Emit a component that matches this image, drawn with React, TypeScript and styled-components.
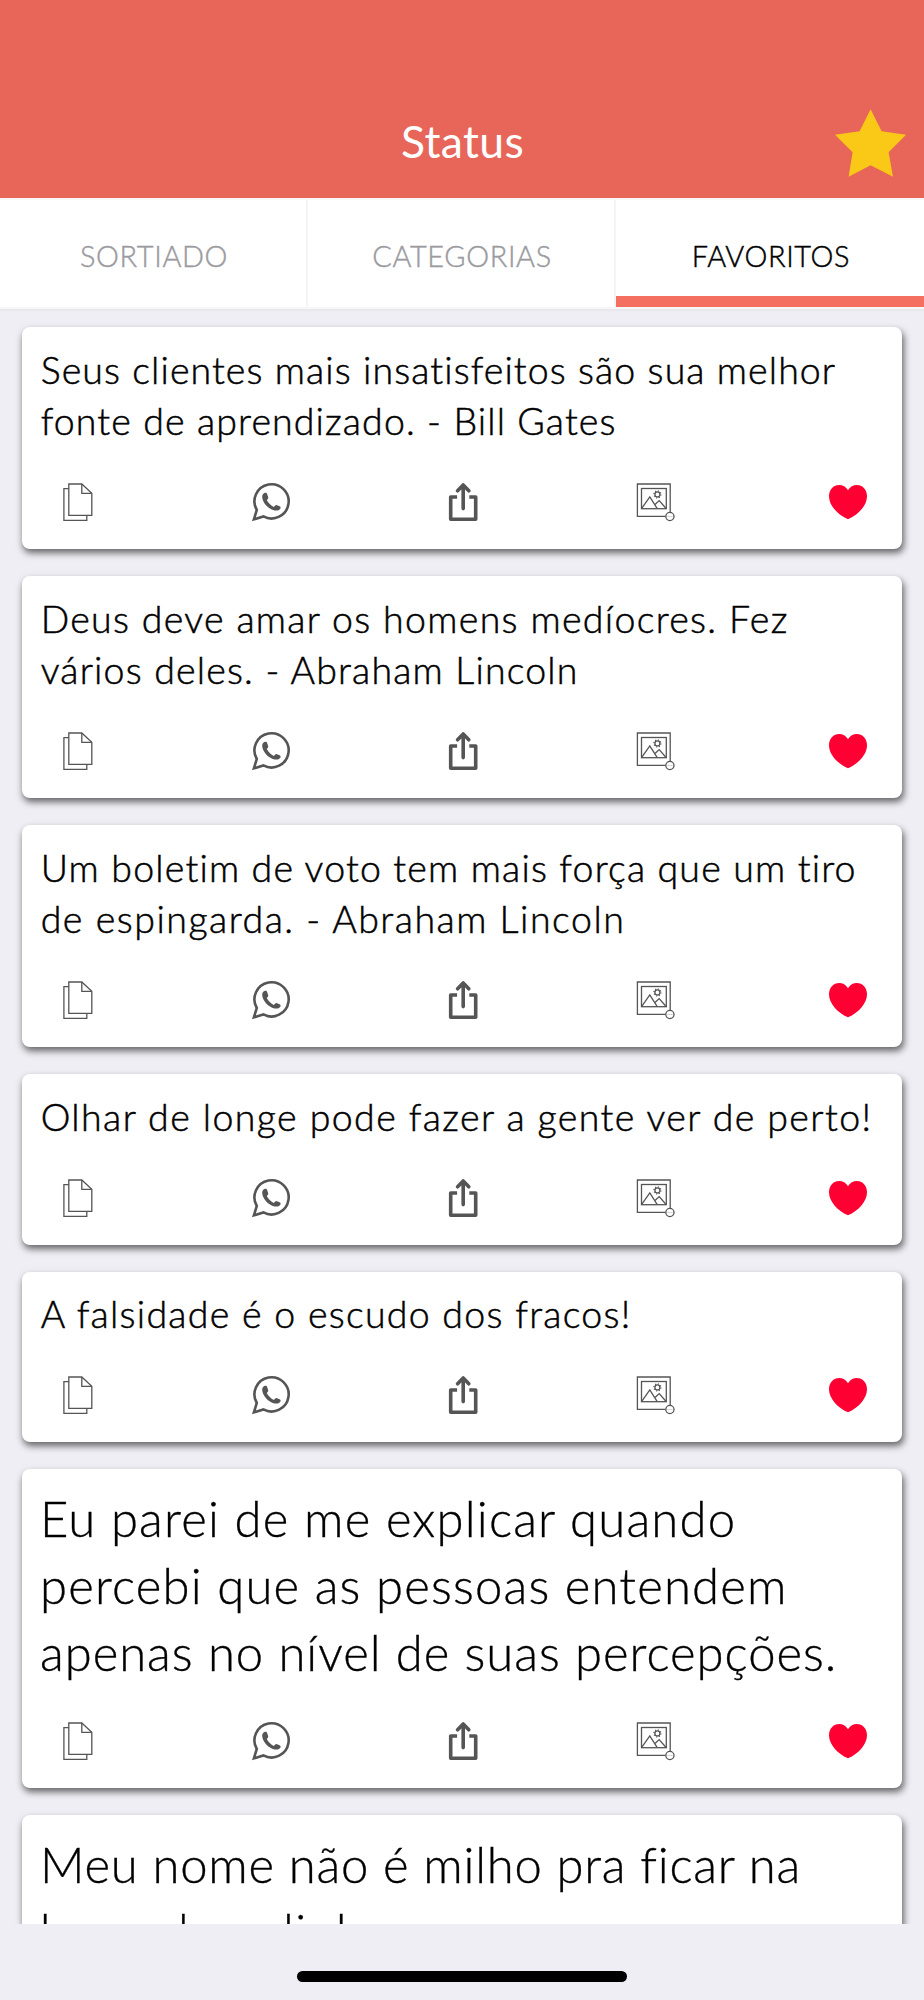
import React from 'react';
import styled, { createGlobalStyle } from 'styled-components';

const GlobalStyle = createGlobalStyle`
  * { box-sizing: border-box; }
  body { margin: 0; background: #efeef4; }
`;

const Screen = styled.div`
  display: flex;
  flex-direction: column;
  width: 924px;
  height: 2000px;
  overflow: hidden;
  background: #efeef4;
  font-family: Lato, "Open Sans", sans-serif;
`;

const Header = styled.header`
  display: grid;
  grid-template-columns: 1fr auto 1fr;
  flex: none;
  height: 198px;
  padding: 109px 18px 0 19px;
  background: #e86659;
`;

const Title = styled.h1`
  grid-column: 2;
  margin: 5px 0 0;
  font-size: 44.5px;
  font-weight: 400;
  line-height: 54px;
  letter-spacing: 0.35px;
  color: #fff;
`;

const StarIcon = styled.svg`
  grid-column: 3;
  justify-self: end;
  display: block;
  width: 71px;
  height: 68px;
  fill: #fac917;
`;

const Tabs = styled.nav`
  display: grid;
  grid-template-columns: 308px 308px 308px;
  flex: none;
  height: 111px;
  border-top: 2px solid #f8f8f9;
  border-bottom: 2px solid #f7f7f8;
  background: #fff;
`;

const Tab = styled.div<{ $active?: boolean }>`
  display: flex;
  justify-content: center;
  padding: 38px 0 0 2px;
  border-right: ${p => (p.$active ? 'none' : '2px solid #f5f5f6')};
  border-bottom: ${p => (p.$active ? '11px solid #f56f60' : 'none')};
  font-size: 28.9px;
  font-weight: 300;
  line-height: 36px;
  letter-spacing: 0.65px;
  color: ${p => (p.$active ? '#000' : '#9b9b9f')};
  -webkit-text-stroke: 0.45px currentColor;
`;

const List = styled.main`
  display: flex;
  flex-direction: column;
  flex: none;
  gap: 26.8px;
  height: 1615px;
  padding: 18px 22px 0;
  overflow: hidden;
  background: linear-gradient(#e4e4e9, #efeef4 3px);
`;

const Card = styled.article<{ $large?: boolean }>`
  flex: none;
  padding: ${p => (p.$large ? 15.6 : 16.5)}px 0 28px;
  border-radius: 8px;
  background: #fff;
  box-shadow: 1.5px 4px 7px rgba(0, 0, 0, 0.58);
`;

const Quote = styled.p<{ $large?: boolean }>`
  margin: 0;
  padding-left: ${p => (p.$large ? 18 : 18.7)}px;
  font-size: ${p => (p.$large ? 49 : 37.5)}px;
  line-height: ${p => (p.$large ? 67 : 51.6)}px;
  font-weight: 300;
  color: #000;
  white-space: nowrap;
  -webkit-text-stroke: ${p => (p.$large ? 0.35 : 0.5)}px #000;
`;

const Line = styled.span<{ $tracking: number }>`
  display: block;
  letter-spacing: ${p => p.$tracking}px;
`;

const Actions = styled.div`
  display: flex;
  justify-content: space-between;
  padding: 36.6px 35px 0 37px;
`;

const Icon = styled.svg`
  display: block;
  width: 38px;
  height: 38px;
  overflow: visible;
  fill: none;
  stroke: #555;
`;

const HomeArea = styled.footer`
  display: flex;
  justify-content: center;
  padding-top: 47px;
`;

const HomeBar = styled.div`
  width: 330px;
  height: 11px;
  border-radius: 6px;
  background: #000;
`;

const CopyIcon = () => (
  <Icon viewBox="0 0 38 38" strokeWidth="1.3">
    <path d="M9.8 1H22.8L32.8 10.3V32.3H9.8Z" />
    <path d="M22.8 1V10.3H32.8" />
    <path d="M9.8 5.6H4.9V37.4H27.8V32.3" />
  </Icon>
);

const WhatsAppIcon = () => (
  <Icon viewBox="0 0 38 38" strokeWidth="2.6">
    <path d="M1.9 36.3L4.8 27A17.1 17.1 0 1 1 11.4 33.4Z" />
    <path
      d="M12.4 10.1C13.8 9.6 14.8 9.9 15.2 11.2L16.2 14.3C16.5 15.3 15.6 16.1 14.8 17C16.4 20.1 18.8 22.6 21.9 23.9C22.8 23.2 23.3 21.9 24.4 22L27.6 23.2C28.7 23.6 28.9 24.6 28.3 25.7C27.2 27.5 24.8 27.8 22.5 27.4C16.3 26 10.8 20.2 10.2 14.3C10.1 12.6 10.6 10.9 12.4 10.1Z"
      fill="#555"
      stroke="none"
    />
  </Icon>
);

const ShareIcon = () => (
  <Icon viewBox="0 0 38 38" strokeWidth="3.6" strokeLinecap="round" strokeLinejoin="round">
    <path d="M11.3 14H6.7V36.2H31.7V14H27.1" strokeLinecap="square" />
    <path d="M19.2 25.6V2.8M13.6 7.8L19.2 2L24.8 7.8" />
  </Icon>
);

const ImageIcon = () => (
  <Icon viewBox="0 0 38 38" strokeWidth="1.3">
    <path d="M33.2 29V1H.4V33.4H28.5" />
    <rect x="4.5" y="5.5" width="24.8" height="20.2" />
    <path d="M4.9 25.2L12.8 14L20.1 25.4M17.7 21.8L22.2 17.6L28.9 25.2" />
    <circle cx="20.4" cy="11.4" r="2.5" />
    <circle cx="20.4" cy="11.4" r="3.5" strokeWidth="1.2" strokeDasharray="1.1 1.65" />
    <circle cx="32.9" cy="33.5" r="4.1" />
    <path d="M30.5 33.5H35.4" strokeWidth=".7" strokeDasharray="1 .9" strokeOpacity=".6" />
  </Icon>
);

const HeartIcon = () => (
  <Icon viewBox="0 0 38 38">
    <path
      d="M19 7.3C21 3.9 24.3 2.1 27.8 2.1C33.6 2.1 38 6.8 38 13.2C38 22.4 29.6 31.6 19 36.3C8.4 31.6 0 22.4 0 13.2C0 6.8 4.4 2.1 10.2 2.1C13.7 2.1 17 3.9 19 7.3Z"
      fill="#ff0033"
      stroke="none"
    />
  </Icon>
);

interface Status {
  large?: boolean;
  lines: [text: string, tracking: number][];
}

const statuses: Status[] = [
  { lines: [['Seus clientes mais insatisfeitos são sua melhor', 1.09], ['fonte de aprendizado. - Bill Gates', 1.12]] },
  { lines: [['Deus deve amar os homens medíocres. Fez', 1.32], ['vários deles. - Abraham Lincoln', 1.18]] },
  { lines: [['Um boletim de voto tem mais força que um tiro', 1.17], ['de espingarda. - Abraham Lincoln', 1.52]] },
  { lines: [['Olhar de longe pode fazer a gente ver de perto!', 1.41]] },
  { lines: [['A falsidade é o escudo dos fracos!', 1.27]] },
  {
    large: true,
    lines: [
      ['Eu parei de me explicar quando', 1.2],
      ['percebi que as pessoas entendem', 1.17],
      ['apenas no nível de suas percepções.', 0.97],
    ],
  },
  { large: true, lines: [['Meu nome não é milho pra ficar na', 0.74], ['boca de galinha.', 1.4]] },
];

export default function App() {
  return (
    <Screen>
      <GlobalStyle />
      <Header>
        <Title>Status</Title>
        <StarIcon viewBox="0 0 71 68">
          <path d="M35.6 .3L46.6 22.3L71 25.7L53.6 43.3L58 67.7L35.6 56.3L13.6 67.7L17.6 43.3L0 25.7L24.6 22.3Z" />
        </StarIcon>
      </Header>
      <Tabs>
        <Tab>SORTIADO</Tab>
        <Tab>CATEGORIAS</Tab>
        <Tab $active>FAVORITOS</Tab>
      </Tabs>
      <List>
        {statuses.map(({ large, lines }) => (
          <Card key={lines[0][0]} $large={large}>
            <Quote $large={large}>
              {lines.map(([text, tracking]) => (
                <Line key={text} $tracking={tracking}>{text}</Line>
              ))}
            </Quote>
            <Actions>
              <CopyIcon />
              <WhatsAppIcon />
              <ShareIcon />
              <ImageIcon />
              <HeartIcon />
            </Actions>
          </Card>
        ))}
      </List>
      <HomeArea>
        <HomeBar />
      </HomeArea>
    </Screen>
  );
}
